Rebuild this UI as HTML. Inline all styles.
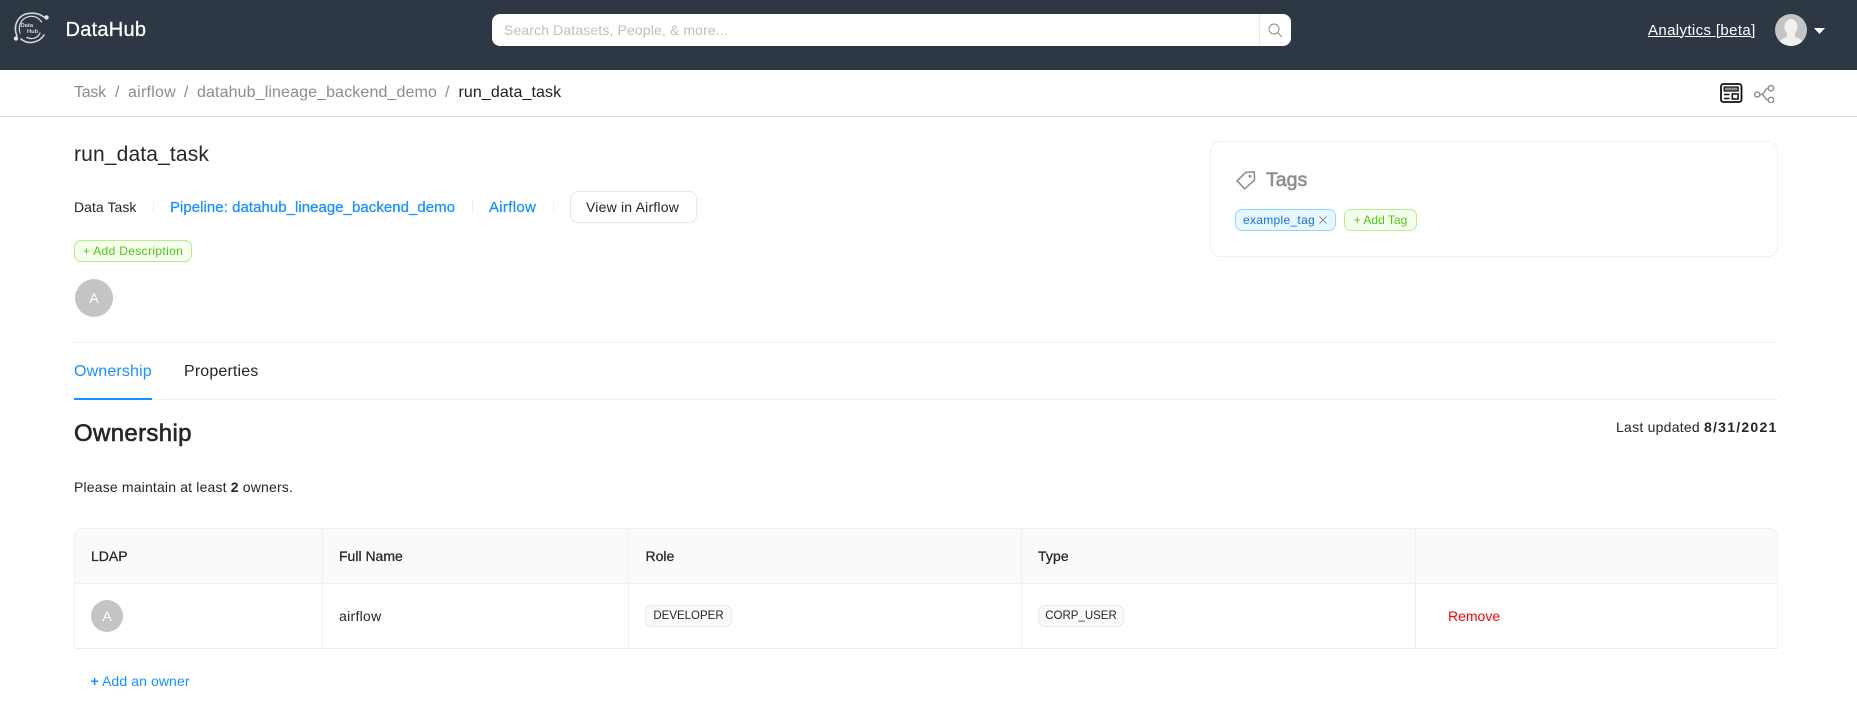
<!DOCTYPE html>
<html lang="en">
<head>
<meta charset="utf-8">
<title>DataHub</title>
<style>
html,body{margin:0;padding:0;background:#fff;width:1857px;height:728px;overflow:hidden}
body{position:relative;font-family:"Liberation Sans",sans-serif;color:#262626;font-size:14px}
.a{position:absolute}
.t{position:absolute;white-space:nowrap;line-height:20px;height:20px}
.m{-webkit-text-stroke:.25px currentColor}
.g{color:#8c8c8c}
.b{color:#1890ff}
.chip{position:absolute;box-sizing:border-box;white-space:nowrap;font-size:12px;border-radius:7px;border:1px solid;text-align:center}
.add{background:#f6ffed;border-color:#b7eb8f;color:#52c41a;height:22px;line-height:20px}
.gr{background:#fafafa;border-color:#e8e8e8;color:#262626;height:22px;line-height:20px;font-size:11.5px}
.ln{position:absolute;background:#f0f0f0}
.av{position:absolute;border-radius:50%;background:#c4c4c4;color:#fff;text-align:center}
</style>
</head>
<body>
<!-- Header -->
<div class="a" style="left:0;top:0;width:1857px;height:70px;background:#2e3845"></div>
<svg class="a" style="left:13px;top:10px" width="40" height="36" viewBox="0 0 40 36" fill="none" stroke="#d4d7db" stroke-linecap="round">
  <path d="M4 26C-.5 16 5 5 15 3.5C21 2.5 27 4 31 7" stroke-width="1.6"/>
  <path d="M7 23C4.5 15 9 8 16 6.5C22 5.5 26 8 28.5 12" stroke-width="1.2"/>
  <path d="M8 29C15 35 26 33 31 25" stroke-width="1.6"/>
  <path d="M14 27.5C19 30 25 28 27 23" stroke-width="1.3"/>
  <circle cx="3" cy="28.5" r="2.2" fill="#e3e5e8" stroke="none"/>
  <circle cx="33.5" cy="7.5" r="2.2" fill="#e3e5e8" stroke="none"/>
  <text x="7.5" y="17" font-family="Liberation Sans, sans-serif" font-size="5.8" font-weight="700" fill="#d4d7db" stroke="none">Data</text>
  <text x="14" y="23" font-family="Liberation Sans, sans-serif" font-size="5.8" font-weight="700" fill="#d4d7db" stroke="none">Hub</text>
</svg>
<div class="t m" style="left:65.5px;top:20px;font-size:20px;color:#fff;letter-spacing:.25px">DataHub</div>

<div class="a" style="left:492px;top:14px;width:799px;height:32px;background:#fff;border-radius:8px"></div>
<div class="t" style="left:504px;top:20px;font-size:14px;color:#bfbfbf;letter-spacing:.13px">Search Datasets, People, &amp; more...</div>
<div class="a" style="left:1259px;top:14px;width:1px;height:32px;background:#e8e8e8"></div>
<svg class="a" style="left:1268px;top:23px" width="15" height="15" viewBox="0 0 15 15" fill="none" stroke="#8c8c8c" stroke-width="1">
  <circle cx="6" cy="6" r="5"/><path d="M9.7 9.7L14 14"/>
</svg>

<div class="t" style="left:1648px;top:20.5px;line-height:20px;color:#fff;text-decoration:underline;font-size:15px;letter-spacing:.37px">Analytics [beta]</div>
<svg class="a" style="left:1775px;top:14px" width="32" height="32" viewBox="0 0 32 32">
  <defs><clipPath id="c"><circle cx="16" cy="16" r="16"/></clipPath></defs>
  <circle cx="16" cy="16" r="16" fill="#c4c4c4"/>
  <g clip-path="url(#c)" fill="#f0f0f0">
    <ellipse cx="16" cy="13" rx="6.5" ry="8"/>
    <path d="M12 19H20V22C20 24 25 24 27 27V32H5V27C7 24 12 24 12 22Z"/>
  </g>
</svg>
<svg class="a" style="left:1814px;top:28px" width="11" height="6" viewBox="0 0 11 6"><path d="M0 0H11L5.5 6Z" fill="#fff"/></svg>

<!-- Breadcrumb -->
<div class="t g" style="left:74px;top:83px;font-size:16px;letter-spacing:-.25px">Task</div>
<div class="t" style="left:115px;top:83px;font-size:16px;color:#8c8c8c">/</div>
<div class="t g" style="left:128px;top:83px;font-size:16px;letter-spacing:.25px">airflow</div>
<div class="t" style="left:184px;top:83px;font-size:16px;color:#8c8c8c">/</div>
<div class="t g" style="left:197px;top:83px;font-size:16px;letter-spacing:.12px">datahub_lineage_backend_demo</div>
<div class="t" style="left:445px;top:83px;font-size:16px;color:#8c8c8c">/</div>
<div class="t" style="left:458.5px;top:83px;font-size:16px;letter-spacing:.1px;color:#1f1f1f">run_data_task</div>
<svg class="a" style="left:1720px;top:83px" width="23" height="20" viewBox="0 0 23 20" fill="none" stroke="#111">
  <rect x="1" y="1" width="20.5" height="18" rx="2.5" stroke-width="1.8"/>
  <rect x="4.2" y="4" width="14" height="4" fill="#8c8c8c" stroke-width="1.2"/>
  <path d="M4 11.5H9.5M4 15.5H9.5" stroke-width="1.4"/>
  <rect x="12.3" y="11" width="5.8" height="5" stroke-width="1.5"/>
</svg>
<svg class="a" style="left:1754px;top:85px" width="21" height="18" viewBox="0 0 21 18" fill="none" stroke="#8c8c8c" stroke-width="1.4">
  <circle cx="3.2" cy="9.5" r="2.6"/><circle cx="17" cy="3.2" r="2.7"/><circle cx="17" cy="15" r="2.7"/>
  <path d="M5.8 9.5H8C10.5 9.5 10.5 3.2 14.3 3.2M8 9.5C10.5 9.5 10.5 15 14.3 15"/>
</svg>
<div class="a" style="left:0;top:116px;width:1857px;height:1px;background:#dcdcdc"></div>

<!-- Title block -->
<div class="t" style="left:74px;top:145px;font-size:21px;letter-spacing:.15px">run_data_task</div>
<div class="t" style="left:74px;top:197px;letter-spacing:.05px">Data Task</div>
<div class="ln" style="left:153px;top:201px;width:1px;height:12px"></div>
<div class="t b m" style="left:170px;top:198px;font-size:15px;letter-spacing:.04px">Pipeline: datahub_lineage_backend_demo</div>
<div class="ln" style="left:472px;top:201px;width:1px;height:12px"></div>
<div class="t b m" style="left:489px;top:198px;font-size:15px;letter-spacing:.3px">Airflow</div>
<div class="ln" style="left:553px;top:201px;width:1px;height:12px"></div>
<div class="a" style="left:570px;top:191px;width:127px;height:32px;box-sizing:border-box;border:1px solid #e6e6e6;border-radius:8px;box-shadow:0 1px 1px rgba(0,0,0,.02)"></div>
<div class="t" style="left:586px;top:197px;letter-spacing:.2px">View in Airflow</div>
<div class="chip add" style="left:74px;top:240px;width:118px;letter-spacing:.35px">+ Add Description</div>
<div class="av" style="left:75px;top:279px;width:38px;height:38px;line-height:38px;font-size:14px">A</div>

<!-- Tags card -->
<div class="a" style="left:1210px;top:141px;width:568px;height:116px;box-sizing:border-box;border:1px solid #f0f0f0;border-radius:10px"></div>
<svg class="a" style="left:1236px;top:171px" width="20" height="19" viewBox="0 0 20 19" fill="none" stroke="#8c8c8c" stroke-width="1.5" stroke-linejoin="round">
  <path d="M1 9.8L9.8 1.4L18.2 .9L18.6 8.8L8.8 17.8Z"/>
  <circle cx="14" cy="5.2" r="1.4" fill="#8c8c8c" stroke="none"/>
</svg>
<div class="t g" style="left:1266px;top:170px;font-size:19.5px;-webkit-text-stroke:.55px #8c8c8c">Tags</div>
<div class="a" style="left:1235px;top:209px;width:101px;height:22px;box-sizing:border-box;background:#e6f7ff;border:1px solid #91d5ff;border-radius:7px"></div>
<div class="t" style="left:1243px;top:210px;font-size:12px;color:#1a6fdc;letter-spacing:.3px">example_tag</div>
<svg class="a" style="left:1319px;top:216px" width="8" height="8" viewBox="0 0 8 8" stroke="#8c8c8c" stroke-width="1"><path d="M.5.5L7.5 7.5M7.5.5L.5 7.5"/></svg>
<div class="chip add" style="left:1344px;top:209px;width:73px">+ Add Tag</div>

<!-- Tabs -->
<div class="ln" style="left:74px;top:342px;width:1704px;height:1px"></div>
<div class="t b" style="left:74px;top:362px;font-size:16px;letter-spacing:.15px">Ownership</div>
<div class="t" style="left:184px;top:362px;font-size:16px;letter-spacing:.15px">Properties</div>
<div class="ln" style="left:74px;top:399px;width:1704px;height:1px"></div>
<div class="a" style="left:74px;top:398px;width:78px;height:2px;background:#1890ff"></div>

<!-- Ownership section -->
<div class="t" style="left:74px;top:423.5px;font-size:24px;letter-spacing:.35px;-webkit-text-stroke:.6px #262626">Ownership</div>
<div class="t" style="left:1616px;top:417px;letter-spacing:.25px">Last updated</div>
<div class="t" style="left:1704px;top:417px;font-weight:700;letter-spacing:1.25px">8/31/2021</div>
<div class="t" style="left:74px;top:477px;letter-spacing:.17px">Please maintain at least <b>2</b> owners.</div>

<!-- Table -->
<div class="a" style="left:74px;top:528px;width:1704px;height:121px;box-sizing:border-box;border:1px solid #f0f0f0;border-bottom-color:#ececec;border-radius:8px 8px 0 0;overflow:hidden">
  <div class="a" style="left:0;top:0;width:100%;height:55px;background:#fafafa"></div>
</div>
<div class="ln" style="left:74px;top:583px;width:1704px;height:1px"></div>
<div class="ln" style="left:322px;top:528px;width:1px;height:120px"></div>
<div class="ln" style="left:628px;top:528px;width:1px;height:120px"></div>
<div class="ln" style="left:1021px;top:528px;width:1px;height:120px"></div>
<div class="ln" style="left:1415px;top:528px;width:1px;height:120px"></div>
<div class="t m" style="left:91px;top:546px">LDAP</div>
<div class="t m" style="left:339px;top:546px">Full Name</div>
<div class="t m" style="left:645.5px;top:546px">Role</div>
<div class="t m" style="left:1038px;top:546px;letter-spacing:.1px">Type</div>
<div class="av" style="left:91px;top:600px;width:32px;height:32px;line-height:32px;font-size:14px">A</div>
<div class="t" style="left:339px;top:606px;letter-spacing:.3px">airflow</div>
<div class="chip gr" style="left:645px;top:605px;width:87px">DEVELOPER</div>
<div class="chip gr" style="left:1038px;top:605px;width:86px">CORP_USER</div>
<div class="t" style="left:1448px;top:606px;color:#ff0000">Remove</div>
<div class="t b" style="left:90.5px;top:671px;letter-spacing:.1px"><b>+</b> Add an owner</div>
</body>
</html>
